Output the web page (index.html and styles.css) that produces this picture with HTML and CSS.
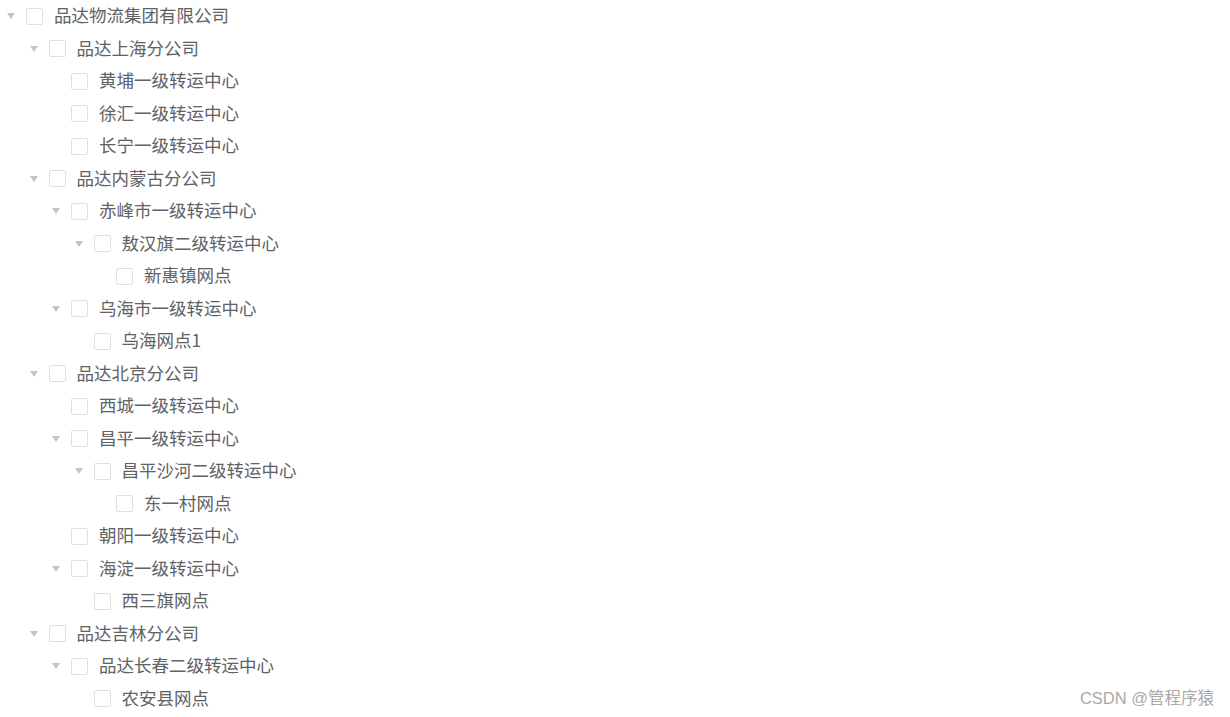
FILE: index.html
```html
<!DOCTYPE html>
<html lang="zh-CN">
<head>
  <meta charset="UTF-8">
  <title>组织树</title>
  <link rel="stylesheet" href="styles.css">
</head>
<body>

<div class="tree">
  <div class="node lv0"><span class="caret"></span><span class="check"></span><span class="label">品达物流集团有限公司</span></div>
  <div class="node lv1"><span class="caret"></span><span class="check"></span><span class="label">品达上海分公司</span></div>
  <div class="node lv2"><span class="caret leaf"></span><span class="check"></span><span class="label">黄埔一级转运中心</span></div>
  <div class="node lv2"><span class="caret leaf"></span><span class="check"></span><span class="label">徐汇一级转运中心</span></div>
  <div class="node lv2"><span class="caret leaf"></span><span class="check"></span><span class="label">长宁一级转运中心</span></div>
  <div class="node lv1"><span class="caret"></span><span class="check"></span><span class="label">品达内蒙古分公司</span></div>
  <div class="node lv2"><span class="caret"></span><span class="check"></span><span class="label">赤峰市一级转运中心</span></div>
  <div class="node lv3"><span class="caret"></span><span class="check"></span><span class="label">敖汉旗二级转运中心</span></div>
  <div class="node lv4"><span class="caret leaf"></span><span class="check"></span><span class="label">新惠镇网点</span></div>
  <div class="node lv2"><span class="caret"></span><span class="check"></span><span class="label">乌海市一级转运中心</span></div>
  <div class="node lv3"><span class="caret leaf"></span><span class="check"></span><span class="label">乌海网点1</span></div>
  <div class="node lv1"><span class="caret"></span><span class="check"></span><span class="label">品达北京分公司</span></div>
  <div class="node lv2"><span class="caret leaf"></span><span class="check"></span><span class="label">西城一级转运中心</span></div>
  <div class="node lv2"><span class="caret"></span><span class="check"></span><span class="label">昌平一级转运中心</span></div>
  <div class="node lv3"><span class="caret"></span><span class="check"></span><span class="label">昌平沙河二级转运中心</span></div>
  <div class="node lv4"><span class="caret leaf"></span><span class="check"></span><span class="label">东一村网点</span></div>
  <div class="node lv2"><span class="caret leaf"></span><span class="check"></span><span class="label">朝阳一级转运中心</span></div>
  <div class="node lv2"><span class="caret"></span><span class="check"></span><span class="label">海淀一级转运中心</span></div>
  <div class="node lv3"><span class="caret leaf"></span><span class="check"></span><span class="label">西三旗网点</span></div>
  <div class="node lv1"><span class="caret"></span><span class="check"></span><span class="label">品达吉林分公司</span></div>
  <div class="node lv2"><span class="caret"></span><span class="check"></span><span class="label">品达长春二级转运中心</span></div>
  <div class="node lv3"><span class="caret leaf"></span><span class="check"></span><span class="label">农安县网点</span></div>
</div>

<div class="mark">CSDN @管程序猿</div>

</body>
</html>
```

FILE: styles.css
```css
body {
  margin: 0;
  background: #fff;
  font-family: "Microsoft YaHei", "Noto Sans CJK SC", "Noto Sans", sans-serif;
  color: #606266;
}
.node {
  height: 32.5px;
  display: flex;
  align-items: center;
  font-size: 17.5px;
}
.lv0 { padding-left: 0; }
.lv1 { padding-left: 22.5px; }
.lv2 { padding-left: 45px; }
.lv3 { padding-left: 67.5px; }
.lv4 { padding-left: 90px; }
.caret {
  width: 22px;
  height: 20px;
  display: flex;
  align-items: center;
  justify-content: center;
}
.caret::before {
  content: "";
  border-left: 4.5px solid transparent;
  border-right: 4.5px solid transparent;
  border-top: 6px solid #c0c4cc;
}
.caret.leaf::before {
  border-top-color: transparent;
}
.check {
  box-sizing: border-box;
  width: 17px;
  height: 17px;
  margin-left: 4px;
  margin-right: 11px;
  border: 1px solid #dcdfe6;
  border-radius: 2px;
  background: #fff;
}
.label {
  line-height: 1;
  white-space: nowrap;
  margin-bottom: 3px;
}
.mark {
  position: absolute;
  right: 16px;
  bottom: 8px;
  font-family: "Liberation Sans", "Noto Sans CJK SC", sans-serif;
  font-size: 16.5px;
  color: #a9a9a9;
}
```
